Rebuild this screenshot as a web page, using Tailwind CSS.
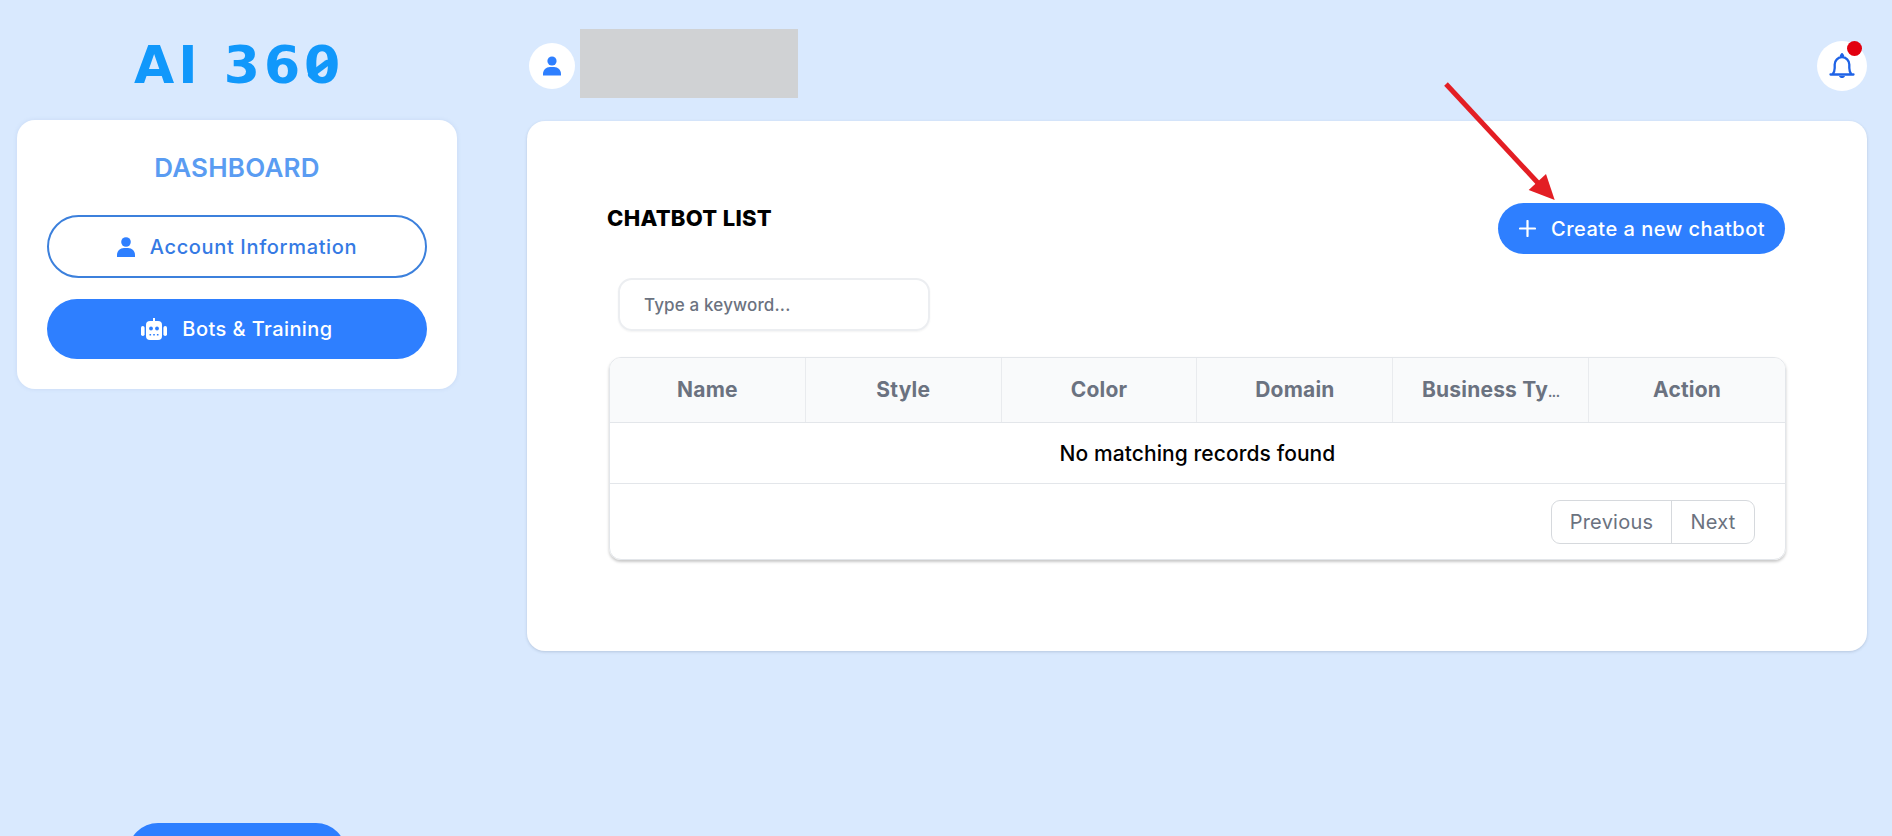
<!DOCTYPE html>
<html lang="en">
<head>
<meta charset="utf-8">
<title>Chatbot list</title>
<script src="https://cdn.jsdelivr.net/npm/@tailwindcss/browser@4"></script>
</head>
<body class="m-0 bg-[#d9e9fe] font-['Inter','Liberation_Sans',sans-serif]">
<div class="relative flex h-[836px] w-[1892px] overflow-hidden">
  <aside class="flex h-full w-[527px] shrink-0 flex-col pl-[17px] pr-[70px]">
    <div class="relative mx-auto mt-[29px] h-[72px] w-[206px] text-center font-['DejaVu_Sans',sans-serif] text-[52px] leading-[72px] font-bold tracking-[4px] whitespace-nowrap text-[#1198fb]">
      AI 360
      <svg class="absolute top-[30px] left-[173px]" width="24" height="20" viewBox="0 0 24 20"><path d="M4 16 20 4" stroke="#1198fb" stroke-width="6" stroke-linecap="round"/></svg>
    </div>
    <section class="mt-[19px] flex h-[269px] flex-col items-center rounded-[18px] bg-white px-[30px] pt-[30px] shadow-[0_0_4px_rgba(100,130,180,0.15)]">
      <h2 class="text-[26px] leading-[36px] font-semibold tracking-[0.25px] text-[#5a9cf2]">DASHBOARD</h2>
      <a class="mt-[29px] flex h-[63px] w-[380px] items-center justify-center gap-[15px] rounded-full border-2 border-[#3c80dc] text-[20px] font-medium tracking-[0.65px] text-[#357ae4]">
        <svg width="18" height="20" viewBox="0 0 18 20" fill="#2e7fff"><circle cx="9" cy="5" r="4.8"/><path d="M0 20v-2c0-4 3-7 7-7h4c4 0 7 3 7 7v2z"/></svg>
        Account Information
      </a>
      <a class="mt-[21px] flex h-[60px] w-[380px] items-center justify-center gap-[15px] rounded-full bg-[#2e7fff] text-[20px] font-medium tracking-[0.43px] text-white">
        <svg width="26" height="22" viewBox="0 0 26 22" fill="#fff"><path d="M12 0h2v3h-2z"/><rect x="5" y="3" width="16" height="19" rx="4"/><rect x="0" y="8" width="3.6" height="10" rx="1.8"/><rect x="22.4" y="8" width="3.6" height="10" rx="1.8"/><circle cx="10" cy="10.5" r="1.9" fill="#2e7fff"/><circle cx="16" cy="10.5" r="1.9" fill="#2e7fff"/><path d="M8.5 16h1.6v1.6H8.5zM12.2 16h1.6v1.6h-1.6zM15.9 16h1.6v1.6h-1.6z" fill="#2e7fff"/></svg>
        Bots &amp; Training
      </a>
    </section>
    <div class="mt-auto mb-[-37px] mr-[14px] ml-[111px] h-[50px] w-[218px] shrink-0 rounded-t-[30px] bg-[#2e7fff]"></div>
  </aside>

  <main class="flex min-w-0 flex-1 flex-col pr-[25px]">
    <header class="flex h-[121px] items-start justify-between">
      <div class="flex items-start pl-[2px]">
        <div class="mt-[43px] flex h-[46px] w-[46px] items-center justify-center rounded-full bg-white">
          <svg width="18" height="20" viewBox="0 0 18 20" fill="#2e7fff"><circle cx="9" cy="5" r="4.6"/><path d="M0 19.5v-1.5c0-4 3-7 7-7h4c4 0 7 3 7 7v1.5z"/></svg>
        </div>
        <div class="mt-[29px] ml-[5px] h-[69px] w-[218px] bg-[#d0d2d4]"></div>
      </div>
      <div class="relative mt-[41px] flex h-[50px] w-[50px] items-center justify-center rounded-full bg-white">
        <svg width="26" height="26" viewBox="0 0 26 26" fill="none" stroke="#1f63e6" stroke-width="2.3" stroke-linecap="round" stroke-linejoin="round"><path d="M1.500 21.500h23M3.500 21.500c1.600-1.800 2.200-3.600 2.200-6.500v-3.500a7.300 7.300 0 0 1 14.600 0V15c0 2.900.6 4.700 2.200 6.500M12 2.600 13 1.200l1 1.400"/><path d="M10 23c.5 1.400 1.600 2 3 2s2.500-.6 3-2z" fill="#1f63e6" stroke="none"/></svg>
        <span class="absolute top-0 right-[5px] h-[15px] w-[15px] rounded-full bg-[#e2000f]"></span>
      </div>
    </header>

    <section class="h-[530px] rounded-[18px] bg-white pt-[82px] shadow-[0_1px_3px_rgba(100,120,150,0.3)]">
      <div class="flex items-start justify-between pr-[82px] pl-[80px]">
        <h2 class="text-[22px] leading-[30px] font-extrabold tracking-[0.3px] text-black">CHATBOT LIST</h2>
        <button class="flex h-[51px] w-[287px] items-center gap-[15px] rounded-full bg-[#2e7fff] pl-[21px] text-[20px] font-medium tracking-[0.5px] whitespace-nowrap text-white">
          <svg width="17" height="17" viewBox="0 0 17 17" stroke="#fff" stroke-width="2.2" stroke-linecap="round"><path d="M8.500 1v15M1 8.500h15"/></svg>
          Create a new chatbot
        </button>
      </div>
      <div class="mt-[24px] ml-[91px] flex h-[53px] w-[312px] items-center rounded-[14px] border-2 border-[#eceef1] pt-[2px] pl-[24px] text-[17px] font-medium tracking-[0.15px] text-[#6b7280] shadow-[0_1px_2px_rgba(0,0,0,0.05)]">Type a keyword...</div>
      <div class="mt-[26px] ml-[82px] w-[1177px] overflow-hidden rounded-[12px] border border-[#e3e6ea] shadow-[0_2px_3px_rgba(0,0,0,0.22)]">
        <div class="grid h-[65px] grid-cols-6 border-b border-[#e3e6ea] bg-[#f9fafb] text-[21px] font-bold tracking-[0.2px] text-[#6b7280]">
          <div class="flex items-center justify-center border-r border-[#e9ebee]">Name</div>
          <div class="flex items-center justify-center border-r border-[#e9ebee]">Style</div>
          <div class="flex items-center justify-center border-r border-[#e9ebee]">Color</div>
          <div class="flex items-center justify-center border-r border-[#e9ebee]">Domain</div>
          <div class="flex items-center justify-center border-r border-[#e9ebee] whitespace-nowrap"><span>Business Ty<span class="text-[13px] tracking-[-0.5px]">...</span></span></div>
          <div class="flex items-center justify-center">Action</div>
        </div>
        <div class="flex h-[61px] items-center justify-center border-b border-[#e3e6ea] pt-[2px] text-[21px] font-medium tracking-[0.08px] text-black">No matching records found</div>
        <div class="flex h-[75px] items-start justify-end pt-[16px] pr-[30px]">
          <div class="flex h-[44px] overflow-hidden rounded-[9px] border border-[#d6d9dd] text-[20px] tracking-[0.25px] text-[#6b7280]">
            <span class="flex w-[120px] items-center justify-center border-r border-[#d6d9dd]">Previous</span>
            <span class="flex w-[82px] items-center justify-center">Next</span>
          </div>
        </div>
      </div>
    </section>
  </main>

  <svg class="absolute top-[80px] left-[1440px]" width="120" height="124" viewBox="0 0 120 124">
    <path d="M6 4 98 103" stroke="#e31e24" stroke-width="5"/>
    <polygon points="114.700,120 88.700,110 106,94" fill="#e31e24"/>
  </svg>
</div>
</body>
</html>
